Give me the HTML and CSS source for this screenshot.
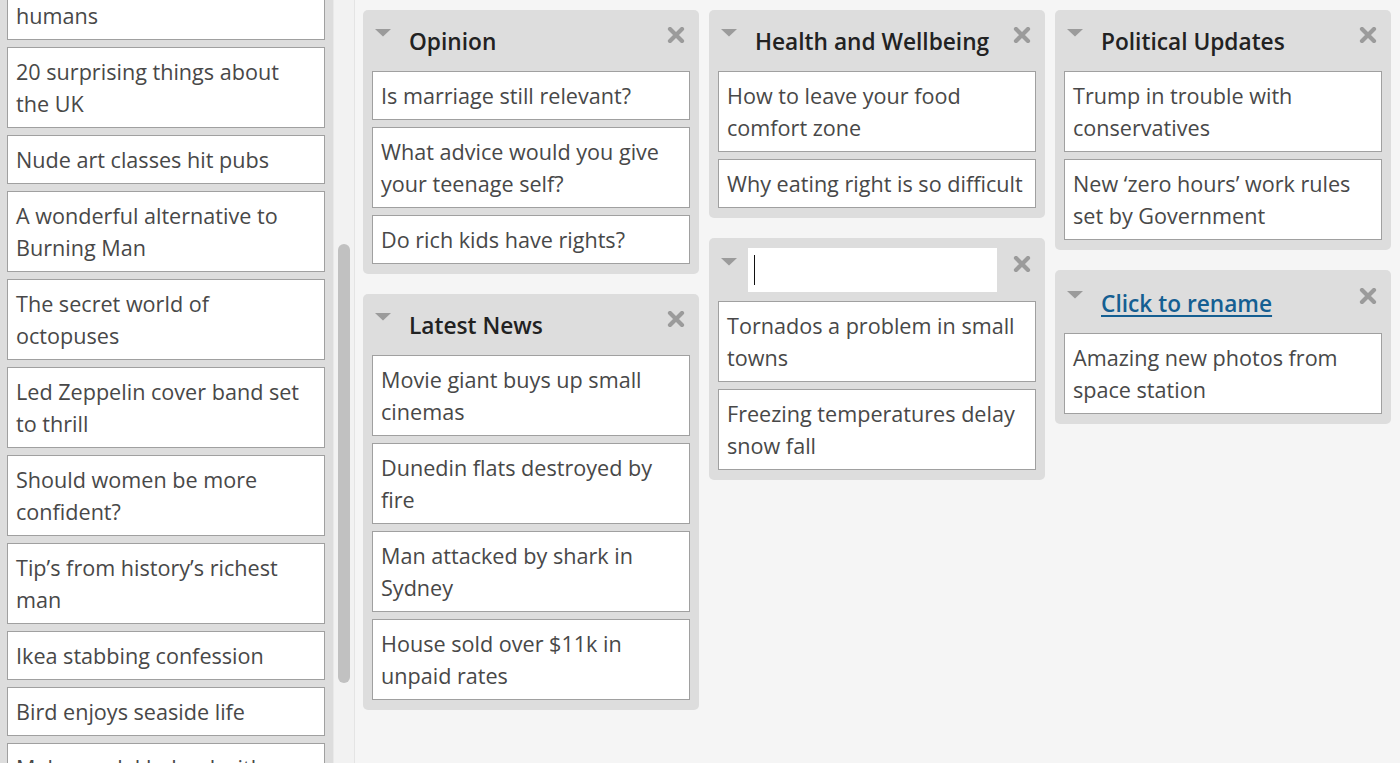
FILE: index.html
```html
<!DOCTYPE html>
<html lang="en">
<head>
<meta charset="utf-8">
<title>Story boards</title>
<link rel="stylesheet" href="styles.css">
</head>
<body>
<div class="app">
  <aside class="sidebar">
    <div class="sidebar-list">
      <div class="card">Robots are set to replace humans</div>
      <div class="card">20 surprising things about the UK</div>
      <div class="card">Nude art classes hit pubs</div>
      <div class="card">A wonderful alternative to Burning Man</div>
      <div class="card">The secret world of octopuses</div>
      <div class="card">Led Zeppelin cover band set to thrill</div>
      <div class="card">Should women be more confident?</div>
      <div class="card">Tip’s from history’s richest man</div>
      <div class="card">Ikea stabbing confession</div>
      <div class="card">Bird enjoys seaside life</div>
      <div class="card">Make model helped with boats</div>
    </div>
    <div class="scrolltrack"><div class="scrollthumb"></div></div>
  </aside>

  <main class="board">
    <div class="column">
      <section class="panel">
        <header class="panel-head">
          <svg class="caret" width="16" height="8" viewBox="0 0 16 8"><path d="M0 0h16L8 7.5z" fill="#9b9b9b"/></svg>
          <h2 class="panel-title">Opinion</h2>
          <svg class="close" width="18" height="16" viewBox="0 0 18 16"><path d="M3 2l12 12M15 2L3 14" stroke="#9b9b9b" stroke-width="4.2" stroke-linecap="round"/></svg>
        </header>
        <div class="cards">
          <div class="card">Is marriage still relevant?</div>
          <div class="card">What advice would you give your teenage self?</div>
          <div class="card">Do rich kids have rights?</div>
        </div>
      </section>
      <section class="panel">
        <header class="panel-head">
          <svg class="caret" width="16" height="8" viewBox="0 0 16 8"><path d="M0 0h16L8 7.5z" fill="#9b9b9b"/></svg>
          <h2 class="panel-title">Latest News</h2>
          <svg class="close" width="18" height="16" viewBox="0 0 18 16"><path d="M3 2l12 12M15 2L3 14" stroke="#9b9b9b" stroke-width="4.2" stroke-linecap="round"/></svg>
        </header>
        <div class="cards">
          <div class="card">Movie giant buys up small cinemas</div>
          <div class="card">Dunedin flats destroyed by fire</div>
          <div class="card">Man attacked by shark in Sydney</div>
          <div class="card">House sold over $11k in unpaid rates</div>
        </div>
      </section>
    </div>

    <div class="column">
      <section class="panel">
        <header class="panel-head">
          <svg class="caret" width="16" height="8" viewBox="0 0 16 8"><path d="M0 0h16L8 7.5z" fill="#9b9b9b"/></svg>
          <h2 class="panel-title">Health and Wellbeing</h2>
          <svg class="close" width="18" height="16" viewBox="0 0 18 16"><path d="M3 2l12 12M15 2L3 14" stroke="#9b9b9b" stroke-width="4.2" stroke-linecap="round"/></svg>
        </header>
        <div class="cards">
          <div class="card">How to leave your food comfort zone</div>
          <div class="card">Why eating right is so difficult</div>
        </div>
      </section>
      <section class="panel">
        <header class="panel-head panel-head--edit">
          <svg class="caret" width="16" height="8" viewBox="0 0 16 8"><path d="M0 0h16L8 7.5z" fill="#9b9b9b"/></svg>
          <div class="title-input"><span class="text-caret"></span></div>
          <svg class="close" width="18" height="16" viewBox="0 0 18 16"><path d="M3 2l12 12M15 2L3 14" stroke="#9b9b9b" stroke-width="4.2" stroke-linecap="round"/></svg>
        </header>
        <div class="cards">
          <div class="card">Tornados a problem in small towns</div>
          <div class="card">Freezing temperatures delay snow fall</div>
        </div>
      </section>
    </div>

    <div class="column">
      <section class="panel">
        <header class="panel-head">
          <svg class="caret" width="16" height="8" viewBox="0 0 16 8"><path d="M0 0h16L8 7.5z" fill="#9b9b9b"/></svg>
          <h2 class="panel-title">Political Updates</h2>
          <svg class="close" width="18" height="16" viewBox="0 0 18 16"><path d="M3 2l12 12M15 2L3 14" stroke="#9b9b9b" stroke-width="4.2" stroke-linecap="round"/></svg>
        </header>
        <div class="cards">
          <div class="card">Trump in trouble with conservatives</div>
          <div class="card">New ‘zero hours’ work rules set by Government</div>
        </div>
      </section>
      <section class="panel">
        <header class="panel-head panel-head--rename">
          <svg class="caret" width="16" height="8" viewBox="0 0 16 8"><path d="M0 0h16L8 7.5z" fill="#9b9b9b"/></svg>
          <h2 class="panel-title"><a class="rename-link" href="#">Click to rename</a></h2>
          <svg class="close" width="18" height="16" viewBox="0 0 18 16"><path d="M3 2l12 12M15 2L3 14" stroke="#9b9b9b" stroke-width="4.2" stroke-linecap="round"/></svg>
        </header>
        <div class="cards">
          <div class="card">Amazing new photos from space station</div>
        </div>
      </section>
    </div>
  </main>
</div>
</body>
</html>
```

FILE: styles.css
```css
* { box-sizing: border-box; }

html, body {
  margin: 0;
  padding: 0;
  height: 100%;
  overflow: hidden;
}

body {
  font-family: "Open Sans", "Noto Sans", "Liberation Sans", sans-serif;
  background: #f5f5f5;
  color: #484848;
}

.app {
  display: flex;
  height: 763px;
  overflow: hidden;
}

/* Sidebar */
.sidebar {
  display: flex;
  flex: 0 0 355px;
  height: 100%;
}

.sidebar-list {
  width: 333px;
  height: 100%;
  overflow: hidden;
  background: #dddddd;
  padding: 0 8px 0 7px;
  display: flex;
  flex-direction: column;
  gap: 7px;
}

.sidebar-list > .card:first-child {
  margin-top: -41px;
}

.scrolltrack {
  width: 22px;
  height: 100%;
  background: #f2f2f2;
  border-left: 1px solid #e9e9e9;
  border-right: 1px solid #e4e4e4;
  padding: 244px 0 0 4px;
}

.scrollthumb {
  width: 12px;
  height: 439px;
  border-radius: 6px;
  background: #c1c1c1;
}

/* Cards */
.card {
  flex: none;
  background: #ffffff;
  border: 1px solid #a0a0a0;
  padding: 8px 8px 7px 8px;
  font-size: 21.6px;
  line-height: 32px;
  color: #484848;
}

/* Board */
.board {
  flex: 1;
  display: flex;
  align-items: flex-start;
  gap: 10px;
  padding: 10px 0 0 8px;
}

.column {
  width: 336px;
  display: flex;
  flex-direction: column;
  gap: 20px;
}

.panel {
  background: #dddddd;
  border-radius: 5px;
  padding: 0 9px 10px;
}

.panel-head {
  display: flex;
  align-items: flex-start;
  padding: 16px 5px 13px 3px;
}

.caret {
  flex: none;
  margin-top: 3px;
}

.close {
  flex: none;
  margin-top: 1px;
}

.panel-title {
  flex: 1;
  margin: 0 0 0 18px;
  font-size: 22.7px;
  line-height: 32px;
  font-weight: 600;
  color: #222222;
}

.rename-link {
  color: #155f92;
  text-decoration: underline;
  text-decoration-thickness: 2px;
  text-underline-offset: 3px;
}

.panel-head--rename {
  padding-top: 18px;
  padding-bottom: 13px;
}

.panel-head--rename .caret { margin-top: 3px; }
.panel-head--rename .close { margin-top: 0; }

.panel-head--edit {
  padding-top: 10px;
  padding-bottom: 9px;
}

.panel-head--edit .caret { margin-top: 10px; }
.panel-head--edit .close { margin-top: 8px; }

.title-input {
  flex: 1;
  height: 44px;
  margin: 0 16px 0 11px;
  background: #ffffff;
  padding: 7px 6px;
}

.text-caret {
  display: block;
  width: 1px;
  height: 30px;
  background: #111111;
}

.cards {
  display: flex;
  flex-direction: column;
  gap: 7px;
}
```
